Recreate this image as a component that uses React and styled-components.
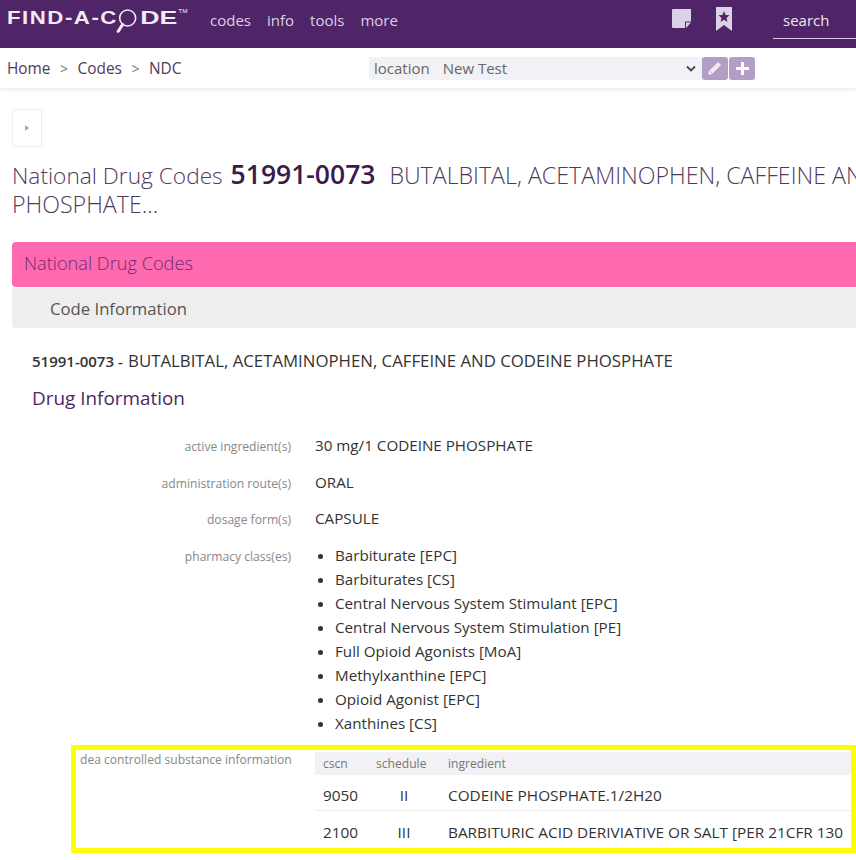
import styled, { createGlobalStyle } from 'styled-components';

const GlobalStyle = createGlobalStyle`
  html, body {
    margin: 0;
    padding: 0;
    background: white;
    overflow: hidden;
  }

  body {
    width: 856px;
    height: 860px;
    font-family: "Open Sans", "Noto Sans", sans-serif;
    color: #333;
  }

  * {
    box-sizing: border-box;
  }
`;

const Page = styled.div`
  width: 856px;
  height: 860px;
  overflow: hidden;
`;

const TopBar = styled.header`
  display: flex;
  align-items: flex-start;
  height: 48px;
  background: #4f2568;
`;

const LogoSlot = styled.div`
  width: 210px;
  padding-left: 7px;
`;

const Logo = styled.div`
  display: flex;
  align-items: center;
  width: 145px;
  height: 36px;
  color: #f1ecf4;
  font-family: "Liberation Sans", sans-serif;
  font-size: 17.5px;
  font-weight: 700;
  letter-spacing: 1.2px;
  white-space: nowrap;
  transform: scaleX(1.27);
  transform-origin: left center;
`;

const LogoMark = styled.svg`
  width: 18px;
  height: 25px;
  margin: 7px 1px 0 -1px;
`;

const LogoEnd = styled.span`
  display: inline-block;
  width: 29.5px;
  letter-spacing: 0;
  transform: scaleX(1.2);
  transform-origin: left center;
`;

const Trademark = styled.span`
  align-self: flex-start;
  margin-top: 8px;
  font-size: 5px;
  font-weight: 400;
  letter-spacing: 0;
`;

const MainNav = styled.nav`
  display: flex;
  gap: 16px;
  margin-top: 9px;
`;

const NavLink = styled.a`
  color: #ddd0e6;
  font-size: 15px;
  line-height: 22px;
`;

const TopIcons = styled.div`
  display: flex;
  align-items: flex-start;
  gap: 25px;
  margin: 7px 41px 0 auto;
`;

const NoteIcon = styled.svg`
  margin-top: 2px;
`;

const Search = styled.div`
  width: 83px;
  height: 39px;
  padding: 9px 0 0 10px;
  border-bottom: 1px solid #d6c8e0;
  color: #ece6f0;
  font-size: 15px;
  line-height: 22px;
`;

const Crumbs = styled.div`
  display: flex;
  align-items: center;
  height: 40px;
  padding-left: 7px;
  box-shadow: 0 1px 4px rgba(0, 0, 0, 0.12);
`;

const CrumbList = styled.div`
  display: flex;
  width: 362px;
  gap: 9.5px;
  padding-top: 1px;
  color: #4f3a5e;
  font-size: 15.4px;
  line-height: 22px;
`;

const CrumbArrow = styled.span`
  color: #777;
  font-size: 14px;
`;

const LocationSelect = styled.div`
  display: flex;
  align-items: center;
  width: 333px;
  height: 23px;
  padding: 0 6px 0 5px;
  border-radius: 2px 0 0 2px;
  background: #f2f1f5;
  color: #666;
  font-size: 15px;
`;

const LocationName = styled.span`
  margin-left: 13px;
`;

const Chevron = styled.svg`
  width: 10px;
  height: 7px;
  margin-left: auto;
`;

const LocationButton = styled.button`
  display: flex;
  align-items: center;
  justify-content: center;
  width: 26px;
  height: 23px;
  margin-right: 1px;
  padding: 0;
  border: 0;
  border-radius: 3px;
  background: #b39fc6;
`;

const Content = styled.main`
  width: 900px;
  padding: 21px 0 0 12px;
`;

const Toggle = styled.div`
  display: flex;
  align-items: center;
  justify-content: center;
  width: 30px;
  height: 38px;
  border: 1px solid #eee;
  border-radius: 3px;
`;

const ToggleArrow = styled.span`
  border-top: 3.5px solid transparent;
  border-bottom: 3.5px solid transparent;
  border-left: 4px solid #aaa;
`;

const Title = styled.h1`
  width: 1010px;
  height: 58px;
  margin: 13px 0 0;
  color: #4f3a5e;
  font-size: 22.7px;
  font-weight: 300;
  line-height: 29px;
`;

const Code = styled.strong`
  margin: 0 8px 0 2px;
  color: #391b4d;
  font-size: 26.5px;
  font-weight: 600;
`;

const TitleDrug = styled.span`
  font-size: 23.2px;
`;

const Banner = styled.div`
  height: 45px;
  margin-top: 24px;
  padding: 8px 12px 0;
  border-radius: 4px 0 0 4px;
  background: #ff69b0;
  color: #6b2d72;
  font-size: 18.2px;
  font-weight: 300;
  line-height: 26px;
`;

const SubBanner = styled.div`
  height: 40px;
  margin-top: 1px;
  padding: 8px 38px 0;
  border-radius: 0 0 0 4px;
  background: #eee;
  color: #555;
  font-size: 16.7px;
  line-height: 26px;
`;

const Summary = styled.div`
  margin: 22px 0 0 20px;
  color: #333;
  font-size: 16.8px;
  line-height: 22px;
`;

const SummaryCode = styled.strong`
  margin-right: 1px;
  font-size: 15px;
  font-weight: 600;
`;

const Heading = styled.h2`
  margin: 13px 0 0 20px;
  color: #4f2568;
  font-size: 18.9px;
  font-weight: 400;
  line-height: 26px;
`;

const Details = styled.dl`
  display: grid;
  grid-template-columns: 279px 1fr;
  column-gap: 24px;
  row-gap: 16.5px;
  width: 844px;
  margin: 24px 0 0;
`;

const Label = styled.dt`
  margin-bottom: -4px;
  color: #888;
  font-size: 12.1px;
  line-height: 24px;
  text-align: right;
`;

const Value = styled.dd`
  margin: 0;
  color: #333;
  font-size: 15.2px;
  line-height: 20px;
`;

const Classes = styled.ul`
  margin: -2px 0 0;
  padding-left: 20px;
`;

const ClassItem = styled.li`
  line-height: 24px;
`;

const Highlight = styled.section`
  display: flex;
  align-items: flex-start;
  width: 785px;
  height: 108px;
  margin: 10px 0 0 59px;
  border: 5px solid #ffff00;
`;

const HighlightLabel = styled.div`
  width: 216px;
  padding-left: 4px;
  color: #888;
  font-size: 12.1px;
  line-height: 20px;
  white-space: nowrap;
`;

const Table = styled.table`
  width: 536px;
  margin: 2px 0 0 23px;
  border-collapse: collapse;
  table-layout: fixed;
  font-size: 15.35px;
  white-space: nowrap;
`;

const HeadCell = styled.th`
  width: ${(props) => props.$width || 'auto'};
  height: 23px;
  padding: 0 0 0 8px;
  background: #f2f1f5;
  color: #777;
  font-size: 12.1px;
  font-weight: 400;
  text-align: left;
`;

const Cell = styled.td`
  height: 36px;
  padding: 6px 0 0 ${(props) => (props.$center ? '0' : '8px')};
  border-top: ${(props) => (props.$ruled ? '1px solid #eee' : '0')};
  text-align: ${(props) => (props.$center ? 'center' : 'left')};
`;

const pharmacyClasses = [
  'Barbiturate [EPC]',
  'Barbiturates [CS]',
  'Central Nervous System Stimulant [EPC]',
  'Central Nervous System Stimulation [PE]',
  'Full Opioid Agonists [MoA]',
  'Methylxanthine [EPC]',
  'Opioid Agonist [EPC]',
  'Xanthines [CS]',
];

const substances = [
  { cscn: '9050', schedule: 'II', ingredient: 'CODEINE PHOSPHATE.1/2H20' },
  { cscn: '2100', schedule: 'III', ingredient: 'BARBITURIC ACID DERIVIATIVE OR SALT [PER 21CFR 130' },
];

export default function App() {
  return (
    <Page>
      <GlobalStyle />
      <TopBar>
        <LogoSlot>
          <Logo>
            FIND-A-C
            <LogoMark viewBox="0 0 18 25">
              <ellipse cx="9" cy="9" rx="6.3" ry="8" fill="none" stroke="#f1ecf4" strokeWidth="1.3" />
              <path d="M5 15.5 L1.5 22.5" stroke="#f1ecf4" strokeWidth="2.6" strokeLinecap="round" />
            </LogoMark>
            <LogoEnd>DE</LogoEnd>
            <Trademark>TM</Trademark>
          </Logo>
        </LogoSlot>
        <MainNav>
          <NavLink>codes</NavLink>
          <NavLink>info</NavLink>
          <NavLink>tools</NavLink>
          <NavLink>more</NavLink>
        </MainNav>
        <TopIcons>
          <NoteIcon width="19" height="19" viewBox="0 0 19 19">
            <path d="M0 1 Q0 0 1 0 H19 V12.5 H13 V19 H1 Q0 19 0 18 Z" fill="#dcd2e6" />
            <path d="M14 19 V13.5 H19 Z" fill="#dcd2e6" />
          </NoteIcon>
          <svg width="16" height="24" viewBox="0 0 16 24">
            <path d="M0 0 H16 V24 L8 18 L0 24 Z" fill="#dcd2e6" />
            <path d="M8 4 L9.6 8 L13.5 8.3 L10.5 10.9 L11.5 15 L8 12.7 L4.5 15 L5.5 10.9 L2.5 8.3 L6.4 8 Z" fill="#4f2568" />
          </svg>
        </TopIcons>
        <Search>search</Search>
      </TopBar>
      <Crumbs>
        <CrumbList>
          <span>Home</span>
          <CrumbArrow>&gt;</CrumbArrow>
          <span>Codes</span>
          <CrumbArrow>&gt;</CrumbArrow>
          <span>NDC</span>
        </CrumbList>
        <LocationSelect>
          <span>location</span>
          <LocationName>New Test</LocationName>
          <Chevron viewBox="0 0 10 7">
            <path d="M1 1.5 L5 5.5 L9 1.5" fill="none" stroke="#444" strokeWidth="1.8" />
          </Chevron>
        </LocationSelect>
        <LocationButton>
          <svg width="16" height="16" viewBox="0 0 16 16">
            <path d="M1 15 L2 11 L11 2 L14 5 L5 14 Z" fill="#f0eaf4" />
            <path d="M2.6 10.6 L5.4 13.4" stroke="#b39fc6" strokeWidth="0.8" />
          </svg>
        </LocationButton>
        <LocationButton>
          <svg width="13" height="13" viewBox="0 0 13 13">
            <path d="M5 0 H8 V5 H13 V8 H8 V13 H5 V8 H0 V5 H5 Z" fill="#fff" />
          </svg>
        </LocationButton>
      </Crumbs>
      <Content>
        <Toggle>
          <ToggleArrow />
        </Toggle>
        <Title>
          National Drug Codes <Code>51991-0073</Code> <TitleDrug>BUTALBITAL, ACETAMINOPHEN, CAFFEINE AND CODEINE PHOSPHATE...</TitleDrug>
        </Title>
        <Banner>National Drug Codes</Banner>
        <SubBanner>Code Information</SubBanner>
        <Summary>
          <SummaryCode>51991-0073 -</SummaryCode> BUTALBITAL, ACETAMINOPHEN, CAFFEINE AND CODEINE PHOSPHATE
        </Summary>
        <Heading>Drug Information</Heading>
        <Details>
          <Label>active ingredient(s)</Label>
          <Value>30 mg/1 CODEINE PHOSPHATE</Value>
          <Label>administration route(s)</Label>
          <Value>ORAL</Value>
          <Label>dosage form(s)</Label>
          <Value>CAPSULE</Value>
          <Label>pharmacy class(es)</Label>
          <Value>
            <Classes>
              {pharmacyClasses.map((item) => (
                <ClassItem key={item}>{item}</ClassItem>
              ))}
            </Classes>
          </Value>
        </Details>
        <Highlight>
          <HighlightLabel>dea controlled substance information</HighlightLabel>
          <Table>
            <thead>
              <tr>
                <HeadCell $width="53px">cscn</HeadCell>
                <HeadCell $width="72px">schedule</HeadCell>
                <HeadCell>ingredient</HeadCell>
              </tr>
            </thead>
            <tbody>
              {substances.map((row, index) => (
                <tr key={row.cscn}>
                  <Cell $ruled={index > 0}>{row.cscn}</Cell>
                  <Cell $ruled={index > 0} $center>{row.schedule}</Cell>
                  <Cell $ruled={index > 0}>{row.ingredient}</Cell>
                </tr>
              ))}
            </tbody>
          </Table>
        </Highlight>
      </Content>
    </Page>
  );
}
